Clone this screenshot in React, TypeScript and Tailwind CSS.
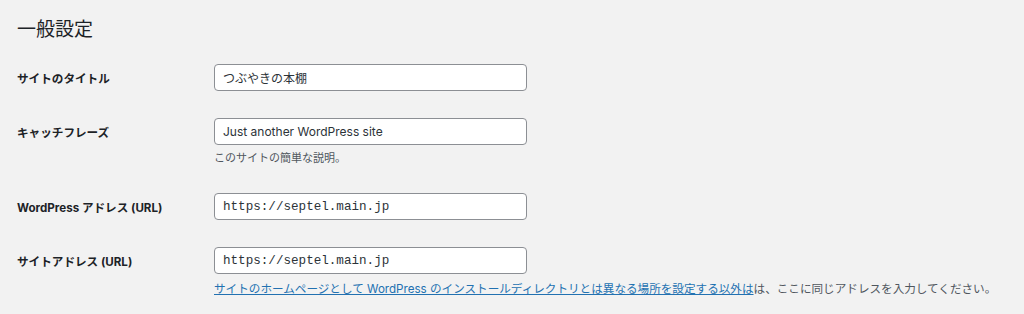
const sans = "font-['Inter','Noto_Sans_CJK_JP',sans-serif]";

const Field = ({ value, mono = false }: { value: string; mono?: boolean }) => (
  <input
    readOnly
    value={value}
    className={`w-[313px] h-[27px] rounded-[4px] border border-[#8c8f94] bg-white px-[8px] text-[#2c3338] outline-none ${
      mono
        ? "font-['Liberation_Mono',monospace] text-[12.6px]"
        : "text-[12px]"
    }`}
  />
);

const Row = ({ label, children }: { label: string; children: React.ReactNode }) => (
  <div className="flex items-start py-[13.5px]">
    <div className="w-[197px] h-[27px] shrink-0 text-[11.6px] leading-[31px] font-bold text-[#1d2327]">
      {label}
    </div>
    <div className="flex flex-col">{children}</div>
  </div>
);

const App = () => {
  return (
    <div className={`w-[1024px] h-[314px] overflow-hidden bg-[#f2f2f2] px-[17px] pt-[17px] ${sans}`}>
      <h1 className="text-[19px] leading-[26px] font-normal text-[#1d2327] mb-[7.5px]">一般設定</h1>
      <Row label="サイトのタイトル">
        <Field value="つぶやきの本棚" />
      </Row>
      <Row label="キャッチフレーズ">
        <Field value="Just another WordPress site" />
        <p className="mt-[5px] text-[11px] leading-[16px] text-[#50575e]">このサイトの簡単な説明。</p>
      </Row>
      <Row label="WordPress アドレス (URL)">
        <Field value="https://septel.main.jp" mono />
      </Row>
      <Row label="サイトアドレス (URL)">
        <Field value="https://septel.main.jp" mono />
        <p className="mt-[7px] text-[11.6px] leading-[16px] text-[#50575e] whitespace-nowrap">
          <a href="#" className="text-[#2271b1] underline">
            サイトのホームページとして WordPress のインストールディレクトリとは異なる場所を設定する以外は
          </a>
          は、ここに同じアドレスを入力してください。
        </p>
      </Row>
    </div>
  );
};

export default App;
